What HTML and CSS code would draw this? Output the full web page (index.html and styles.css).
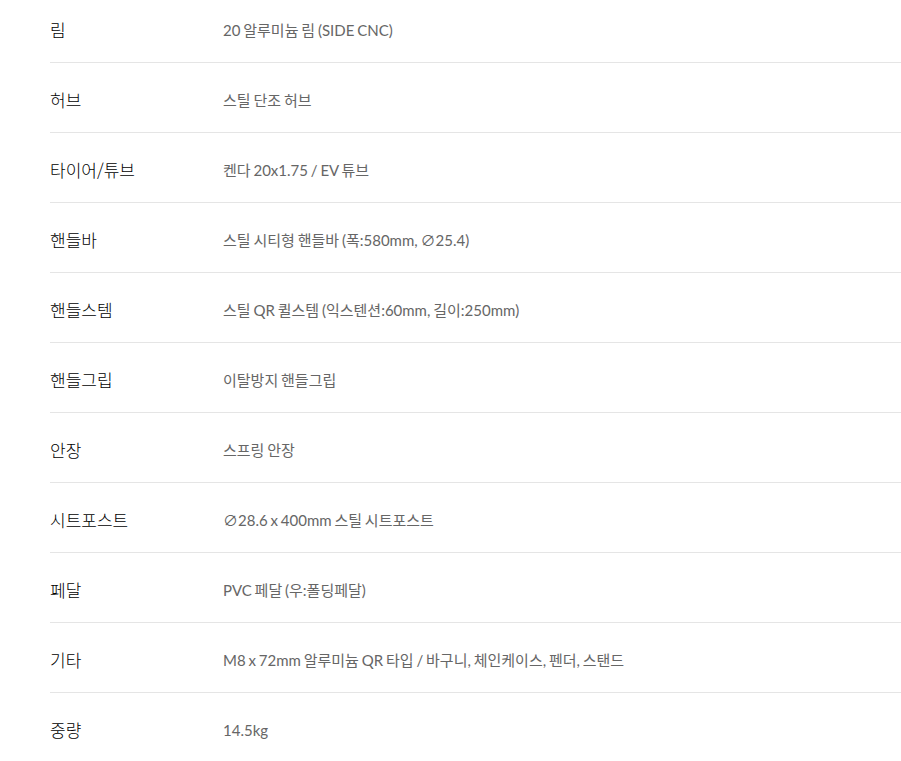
FILE: index.html
```html
<!DOCTYPE html>
<html lang="ko">
<head>
  <meta charset="UTF-8" />
  <meta name="viewport" content="width=device-width, initial-scale=1.0"/>
  <title>제품 사양</title>
  <link rel="stylesheet" href="styles.css">
</head>
<body>
  <dl class="spec">
    <div class="spec-row"><dt>림</dt><dd>20 알루미늄 림 (SIDE CNC)</dd></div>
    <div class="spec-row"><dt>허브</dt><dd>스틸 단조 허브</dd></div>
    <div class="spec-row"><dt>타이어/튜브</dt><dd>켄다 20x1.75 / EV 튜브</dd></div>
    <div class="spec-row"><dt>핸들바</dt><dd>스틸 시티형 핸들바 (폭:580mm, ∅25.4)</dd></div>
    <div class="spec-row"><dt>핸들스템</dt><dd>스틸 QR 퀼스템 (익스텐션:60mm, 길이:250mm)</dd></div>
    <div class="spec-row"><dt>핸들그립</dt><dd>이탈방지 핸들그립</dd></div>
    <div class="spec-row"><dt>안장</dt><dd>스프링 안장</dd></div>
    <div class="spec-row"><dt>시트포스트</dt><dd>∅28.6 x 400mm 스틸 시트포스트</dd></div>
    <div class="spec-row"><dt>페달</dt><dd>PVC 페달 (우:폴딩페달)</dd></div>
    <div class="spec-row"><dt>기타</dt><dd>M8 x 72mm 알루미늄 QR 타입 / 바구니, 체인케이스, 펜더, 스탠드</dd></div>
    <div class="spec-row"><dt>중량</dt><dd>14.5kg</dd></div>
  </dl>
</body>
</html>
```

FILE: styles.css
```css
body {
  margin: 0;
  background: #fff;
  font-family: "Noto Sans CJK KR", "Noto Sans", sans-serif;
}
.spec {
  margin: 0 0 0 50px;
}
.spec-row {
  display: flex;
  align-items: center;
  height: 70px;
  padding-top: 3px;
  box-sizing: border-box;
  border-bottom: 1px solid #e5e5e5;
}
.spec-row:first-child {
  height: 63px;
  padding: 0 0 3px;
}
.spec-row:last-child {
  border-bottom: none;
}
.spec dt {
  width: 173px;
  flex-shrink: 0;
  font-size: 17px;
  font-weight: 300;
  color: #000;
}
.spec dd {
  margin: 0;
  font-family: Lato, "Noto Sans CJK KR", sans-serif;
  font-size: 15px;
  word-spacing: -1px;
  color: #666;
}
```
